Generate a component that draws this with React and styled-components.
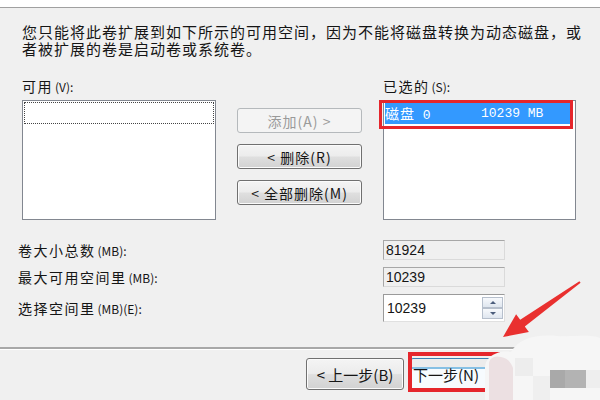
import styled, { createGlobalStyle } from 'styled-components';

const GlobalStyle = createGlobalStyle`
  html, body {
    margin: 0;
    padding: 0;
    background: #f0f0f0;
  }
`;

const cjk = `"Noto Sans CJK SC", "Liberation Sans", sans-serif`;

const Dialog = styled.div`
  position: relative;
  width: 600px;
  height: 400px;
  overflow: hidden;
  background: #f0f0f0;
  font-family: ${cjk};
  color: #151515;
`;

const TopBand = styled.div`
  height: 7px;
  background: #fff;
  border-bottom: 1px solid #a0a0a0;
`;

const Body = styled.div`
  padding: 15px 0 0 22px;
`;

const Intro = styled.p`
  margin: 0;
  font-size: 15px;
  line-height: 17px;
  letter-spacing: 1px;
  white-space: nowrap;
`;

const Pickers = styled.div`
  display: grid;
  grid-template-columns: 194px 125px 193px;
  column-gap: 21px;
  margin-top: 22px;
`;

const ListColumn = styled.div`
  display: flex;
  flex-direction: column;
  gap: 6px;
`;

const Caption = styled.div`
  font-size: 14px;
  line-height: 14px;
  letter-spacing: 1.5px;
  white-space: nowrap;
`;

const Hint = styled.span`
  font-size: 12px;
  letter-spacing: 0;
  margin-left: 2px;
`;

const ListBox = styled.div`
  height: 120px;
  box-sizing: border-box;
  border: 1px solid #828790;
  background: #fff;
  padding: 1px;
`;

const ListItem = styled.div`
  position: relative;
  height: 22px;
  display: grid;
  grid-template-columns: 96px auto;
  align-items: center;
  font-family: "Liberation Mono", "Noto Sans CJK SC", monospace;
  font-size: 13px;
  ${(p) => p.$selected && 'background: #3399ff; color: #fff; margin-right: 3px;'}
  ${(p) => p.$focus && 'outline: 1px dotted #444; outline-offset: -1px;'}
`;

const ItemName = styled.span`
  font-family: ${cjk};
  font-size: 14px;
  letter-spacing: 1px;
`;

const RedFrame = styled.div`
  position: absolute;
  top: ${(p) => p.$top}px;
  left: ${(p) => p.$left}px;
  right: ${(p) => p.$right}px;
  bottom: ${(p) => p.$bottom}px;
  border: ${(p) => p.$width}px solid #e5262c;
  pointer-events: none;
`;

const ButtonColumn = styled.div`
  display: flex;
  flex-direction: column;
  gap: 11px;
  padding-top: 29px;
`;

const PushButton = styled.button`
  position: relative;
  box-sizing: border-box;
  height: ${(p) => p.$height || 25}px;
  width: ${(p) => (p.$width ? `${p.$width}px` : '100%')};
  padding: 0 2px;
  border: 1px solid #707070;
  border-radius: 3px;
  background: linear-gradient(#f4f4f4 0%, #ececec 48%, #dfdfdf 52%, #d2d2d2 100%);
  box-shadow: inset 0 0 0 1px #fbfbfb;
  font-family: ${cjk};
  font-size: ${(p) => p.$size || 14}px;
  letter-spacing: ${(p) => (p.$size ? 0 : 1)}px;
  color: #151515;
  white-space: nowrap;

  &:disabled {
    border-color: #b5b9bc;
    background: #f4f4f4;
    color: #9a9a9a;
    box-shadow: none;
  }
`;

const DefaultButton = styled(PushButton)`
  border-color: #3c7fb1;
  text-align: left;
  padding-left: 2px;
  background: linear-gradient(#ececec 0 8px, #86c0e4 8px 10px, #f7fbfe 10px);
  box-shadow: none;
`;

const Fields = styled.div`
  display: grid;
  grid-template-columns: 365px 122px;
  grid-template-rows: 20px 20px 28px;
  row-gap: 7px;
  margin: 20px 0 0 -4px;
`;

const FieldLabel = styled.div`
  align-self: center;
  font-size: 14px;
  line-height: 14px;
  letter-spacing: 1.5px;
  white-space: nowrap;
`;

const ReadonlyBox = styled.div`
  box-sizing: border-box;
  border: 1px solid;
  border-color: #a7a7a7 #dadada #dadada #a7a7a7;
  background: #f0f0f0;
  padding-left: 2px;
  font-family: "Liberation Sans", sans-serif;
  font-size: 14px;
  line-height: 18px;
`;

const SpinBox = styled.div`
  display: flex;
  box-sizing: border-box;
  border: 1px solid;
  border-color: #9a9a9a #e0e0e0 #e0e0e0 #9a9a9a;
  background: #fff;
`;

const SpinValue = styled.div`
  flex: 1;
  display: flex;
  align-items: center;
  padding-left: 3px;
  font-family: "Liberation Sans", sans-serif;
  font-size: 14px;
`;

const Spinner = styled.div`
  display: flex;
  flex-direction: column;
  width: 21px;
  padding: 2px 1px 2px 0;
`;

const SpinArrow = styled.div`
  flex: 1;
  display: flex;
  align-items: center;
  justify-content: center;
  border: 1px solid #b6bfcc;
  background: linear-gradient(#f7f9fc, #dfe6ef);

  &::after {
    content: '';
    border-left: 3px solid transparent;
    border-right: 3px solid transparent;
    ${(p) => (p.$dir === 'up' ? 'border-bottom: 3px solid #4b5d7c;' : 'border-top: 3px solid #4b5d7c;')}
  }
`;

const Separator = styled.div`
  margin-top: 25px;
  border-top: 2px solid #a8a8a8;
  border-bottom: 1px solid #fff;
`;

const Footer = styled.div`
  display: flex;
  justify-content: flex-end;
  gap: 6px;
  padding: 8px 6px 0 0;
`;

const Overlay = styled.svg`
  position: absolute;
  left: ${(p) => p.$x}px;
  top: ${(p) => p.$y}px;
  pointer-events: none;
`;

const App = () => {
  return (
    <>
      <GlobalStyle />
      <Dialog>
        <TopBand />
        <Body>
          <Intro>
            您只能将此卷扩展到如下所示的可用空间，因为不能将磁盘转换为动态磁盘，或
            <br />
            者被扩展的卷是启动卷或系统卷。
          </Intro>

          <Pickers>
            <ListColumn>
              <Caption>
                可用<Hint>(V):</Hint>
              </Caption>
              <ListBox>
                <ListItem $focus />
              </ListBox>
            </ListColumn>

            <ButtonColumn>
              <PushButton disabled>添加(A) &gt;</PushButton>
              <PushButton>&lt; 删除(R)</PushButton>
              <PushButton>&lt; 全部删除(M)</PushButton>
            </ButtonColumn>

            <ListColumn>
              <Caption>
                已选的<Hint>(S):</Hint>
              </Caption>
              <ListBox>
                <ListItem $selected>
                  <span>
                    <ItemName>磁盘</ItemName> 0
                  </span>
                  <span>10239 MB</span>
                  <RedFrame $top={-2} $left={-6} $right={-2} $bottom={-5} $width={3} />
                </ListItem>
              </ListBox>
            </ListColumn>
          </Pickers>

          <Fields>
            <FieldLabel>
              卷大小总数<Hint>(MB):</Hint>
            </FieldLabel>
            <ReadonlyBox>81924</ReadonlyBox>
            <FieldLabel>
              最大可用空间里<Hint>(MB):</Hint>
            </FieldLabel>
            <ReadonlyBox>10239</ReadonlyBox>
            <FieldLabel>
              选择空间里<Hint>(MB)(E):</Hint>
            </FieldLabel>
            <SpinBox>
              <SpinValue>10239</SpinValue>
              <Spinner>
                <SpinArrow $dir="up" />
                <SpinArrow $dir="down" />
              </Spinner>
            </SpinBox>
          </Fields>
        </Body>

        <Separator />
        <Footer>
          <PushButton $width={98} $height={32} $size={15}>
            &lt; 上一步(B)
          </PushButton>
          <DefaultButton $width={95} $height={32} $size={15}>
            下一步(N)
            <RedFrame $top={-7} $left={-3} $right={-2} $bottom={-3} $width={4} />
          </DefaultButton>
          <PushButton $width={83} $height={32} $size={15}>
            取消
          </PushButton>
        </Footer>

        <Overlay $x={495} $y={275} width="95" height="70" viewBox="0 0 95 70">
          <polygon
            points="8,62 21.1,39.2 25.2,44.8 84.4,6.2 85.6,7.8 29.8,51.4 33.9,57.1"
            fill="#e9302f"
          />
        </Overlay>

        <Overlay $x={485} $y={330} width="115" height="70" viewBox="0 0 115 70">
          <path
            d="M0 70 V38 C0 26 14 20 26 22 C34 8 52 4 72 6 C90 7 105 4 115 8 V70 Z"
            fill="#f6f6f6"
          />
          <path d="M4 70 V34 C4 28 10 25 16 27 C22 28 26 32 28 38 V70 Z" fill="#ece0e2" />
          <rect x="30" y="28" width="18" height="18" fill="#ededed" />
          <rect x="48" y="46" width="17" height="24" fill="#efefef" />
          <rect x="101" y="40" width="14" height="18" fill="#eeeeee" />
          <rect x="65" y="40" width="15" height="18" fill="#a9a9a9" />
          <rect x="80" y="40" width="21" height="18" fill="#b3b3b3" />
        </Overlay>
      </Dialog>
    </>
  );
};

export default App;
